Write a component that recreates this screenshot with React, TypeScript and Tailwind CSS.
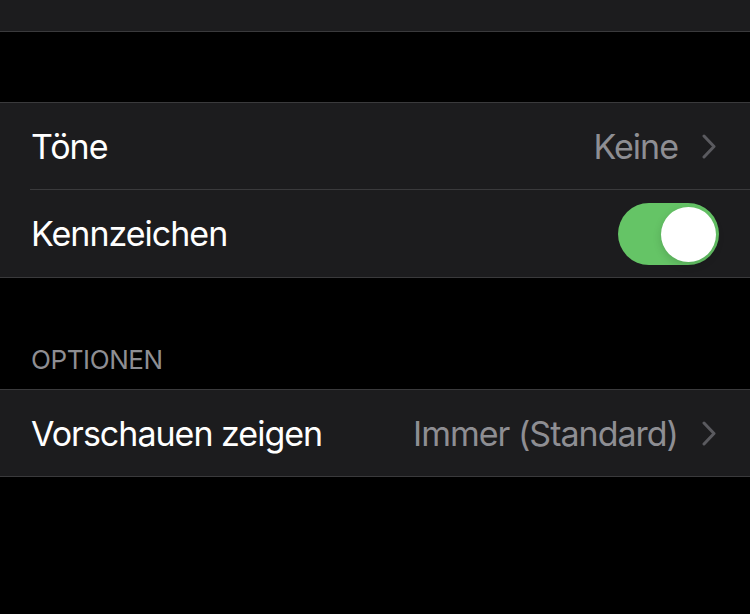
import React from 'react'

const font = { fontFamily: 'Inter, "Noto Sans", sans-serif' }

function Chevron() {
  return (
    <svg width="14" height="25" viewBox="0 0 14 25" fill="none" className="shrink-0">
      <path d="M2 2l10 10.5L2 23" stroke="#5a5a5f" strokeWidth="3" strokeLinecap="round" strokeLinejoin="round" />
    </svg>
  )
}

function Toggle() {
  return (
    <div className="relative w-[101px] h-[62px] rounded-full bg-[#65c466] shrink-0">
      <div className="absolute right-[3px] top-[4px] w-[55px] h-[55px] rounded-full bg-white shadow-[0_3px_8px_rgba(0,0,0,0.15)]" />
    </div>
  )
}

export default function App() {
  return (
    <div className="w-[750px] h-[614px] bg-black overflow-hidden tracking-[-1px]" style={font}>
      {/* top cell remnant */}
      <div className="h-[32px] bg-[#1c1c1e] border-b border-[#3a3a3c]" />

      <div className="h-[70px]" />

      {/* sound group */}
      <div className="bg-[#1c1c1e] border-y border-[#3a3a3c]">
        <div className="h-[86px] flex items-center pl-[31px] pr-[34px]">
          <span className="text-[34px] text-white flex-1">Töne</span>
          <span className="text-[34px] text-[#8e8e93] mr-[24px]">Keine</span>
          <Chevron />
        </div>
        <div className="h-px ml-[30px] bg-[#3a3a3c]" />
        <div className="h-[87px] flex items-center pl-[31px] pr-[31px]">
          <span className="text-[34px] text-white flex-1">Kennzeichen</span>
          <Toggle />
        </div>
      </div>

      {/* header */}
      <div className="h-[111px] flex items-end pl-[31px] pb-[14px]">
        <span className="text-[26px] leading-[30px] tracking-[-0.4px] text-[#8e8e93] uppercase">Optionen</span>
      </div>

      <div className="bg-[#1c1c1e] border-y border-[#3a3a3c]">
        <div className="h-[86px] flex items-center pl-[31px] pr-[34px]">
          <span className="text-[34px] text-white flex-1">Vorschauen zeigen</span>
          <span className="text-[34px] text-[#8e8e93] mr-[24px]">Immer (Standard)</span>
          <Chevron />
        </div>
      </div>
    </div>
  )
}
